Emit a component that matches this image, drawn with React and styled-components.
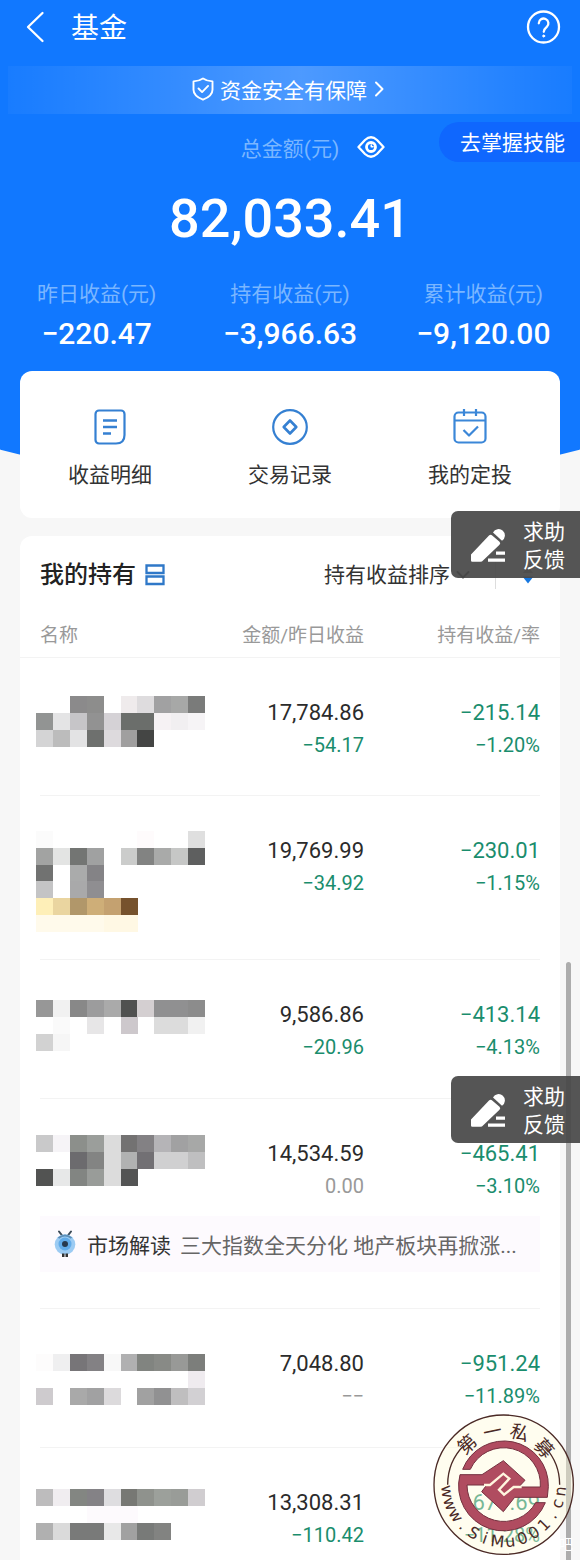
import React from "react";
import styled, { createGlobalStyle } from "styled-components";

const GlobalStyle = createGlobalStyle`
  *, *::before { box-sizing: border-box; }
  body {
    margin: 0;
    background: #f7f7f7;
    font-family: Roboto, "Noto Sans CJK SC", sans-serif;
    color: #333;
  }
  button, select {
    font: inherit;
    color: inherit;
    background: none;
    border: 0;
    padding: 0;
    margin: 0;
    cursor: pointer;
  }
  svg { display: block; flex: none; }
  h1, h2, p, dl, dd, dt { margin: 0; }
`;

const Page = styled.div`
  position: relative;
  overflow: hidden;
  isolation: isolate;
  &::before {
    content: "";
    position: absolute;
    inset: 0 0 auto;
    height: 487px;
    background: #1178ff;
    clip-path: ellipse(130% 100% at 50% 0);
    z-index: -1;
  }
`;

const TopBar = styled.header`
  display: flex;
  align-items: center;
  height: 54px;
  padding: 0 18px 0 22px;
  color: #fff;
`;

const IconButton = styled.button`
  display: grid;
  place-items: center;
`;

const Title = styled.h1`
  flex: 1;
  margin-left: 21px;
  padding-top: 3px;
  font-size: 28px;
  line-height: 40px;
  font-weight: 400;
`;

const SafetyBanner = styled.a`
  display: flex;
  align-items: center;
  justify-content: center;
  gap: 6px;
  height: 48px;
  margin: 12px 8px 0;
  padding: 0 3px 2px 0;
  font-size: 21px;
  color: #fff;
  text-decoration: none;
  background: linear-gradient(90deg, rgba(255, 255, 255, 0.03), rgba(255, 255, 255, 0.14) 28%, rgba(255, 255, 255, 0.25) 52%, rgba(255, 255, 255, 0.14) 76%, rgba(255, 255, 255, 0.03));
`;

const SkillPill = styled.button`
  position: absolute;
  top: 122px;
  right: 0;
  height: 40px;
  padding: 0 15px 2px 21px;
  border-radius: 20px 0 0 20px;
  background: #0f67fe;
  color: #fff;
  font-size: 21px;
`;

const Total = styled.section`
  padding-top: 16px;
  text-align: center;
  color: #fff;
`;

const TotalLabel = styled.div`
  display: flex;
  align-items: center;
  justify-content: center;
  gap: 18px;
  height: 34px;
  padding-left: 46px;
  font-size: 21px;
  color: #7ab6ff;
  button { color: #fff; }
`;

const TotalAmount = styled.p`
  margin-top: 21px;
  font-size: 54px;
  line-height: 68px;
  font-weight: 500;
`;

const Stats = styled.dl`
  display: grid;
  grid-template-columns: repeat(3, 1fr);
  padding: 27px 0 19px;
  text-align: center;
`;

const StatLabel = styled.dt`
  font-size: 21px;
  line-height: 28px;
  color: #7ab6ff;
`;

const StatValue = styled.dd`
  margin-top: 8px;
  font-size: 30px;
  line-height: 36px;
  font-weight: 500;
  color: #fff;
`;

const Card = styled.section`
  margin: 0 20px 18px;
  background: #fff;
  border-radius: 12px;
`;

const Shortcuts = styled(Card)`
  display: grid;
  grid-template-columns: repeat(3, 1fr);
  height: 147px;
`;

const Shortcut = styled.button`
  display: flex;
  flex-direction: column;
  align-items: center;
  gap: 11px;
  padding-top: 37px;
  font-size: 21px;
  line-height: 32px;
  color: #333;
`;

const Holdings = styled(Card)`
  margin-bottom: 0;
  border-radius: 12px 12px 0 0;
`;

const HoldingsHead = styled.div`
  display: flex;
  align-items: center;
  height: 78px;
  padding: 0 25px 0 20px;
`;

const HoldingsTitle = styled.h2`
  font-size: 24px;
  line-height: 32px;
  font-weight: 500;
  color: #222;
`;

const ViewToggle = styled(IconButton)`
  margin-left: 9px;
  margin-right: auto;
`;

const SortSelect = styled.select`
  appearance: none;
  font-size: 21px;
  line-height: 32px;
  margin-right: 6px;
`;

const HeadDivider = styled.i`
  width: 1px;
  height: 28px;
  margin: 0 25px;
  background: #ddd;
`;

const Table = styled.table`
  display: block;
  thead, tbody { display: block; }
`;

const HeadRow = styled.tr`
  display: grid;
  grid-template-columns: 169px 1fr 176px;
  height: 44px;
  padding: 0 20px;
  border-bottom: 1px solid #f3f3f3;
`;

const HeadCell = styled.th`
  padding: 0;
  font-size: 19px;
  line-height: 43px;
  font-weight: 400;
  color: #999;
  text-align: ${(p) => (p.$start ? "left" : "right")};
`;

const Row = styled.tr`
  display: grid;
  grid-template-columns: 165px 1fr 176px;
  margin: 0 20px;
  padding-bottom: ${(p) => p.$space}px;
  border-bottom: 1px solid #f3f3f3;
  &:last-child { border-bottom: 0; }
`;

const NameCell = styled.td`
  height: 106px;
  padding: 0;
  svg {
    margin-left: -4px;
    overflow: visible;
  }
`;

const FigureCell = styled.td`
  padding: 38px 0 0;
  text-align: right;
`;

const tones = { dark: "#2b2b2b", loss: "#1a8d6d", muted: "#999" };

const Figure = styled.div`
  font-size: ${(p) => (p.$small ? 20 : 22)}px;
  line-height: 33px;
  color: ${(p) => tones[p.$tone]};
`;

const InsightCell = styled.td`
  grid-column: 1 / -1;
  margin-top: 11px;
  padding: 0;
`;

const Insight = styled.a`
  display: flex;
  align-items: center;
  height: 56px;
  padding-left: 14px;
  background: #fdfafe;
  font-size: 21px;
  color: #666;
  text-decoration: none;
  white-space: nowrap;
  strong {
    margin: 0 9px 0 11px;
    font-weight: 400;
    color: #333;
  }
`;

const Feedback = styled.button`
  position: absolute;
  top: ${(p) => p.$top}px;
  right: 0;
  display: flex;
  align-items: center;
  gap: 16px;
  height: 67px;
  padding: 2px 15px 0 19px;
  border-radius: 7px 0 0 7px;
  background: rgba(72, 72, 72, 0.93);
  color: #fff;
  font-size: 21px;
  line-height: 28px;
  span { width: 42px; }
`;

const ScrollThumb = styled.div`
  position: absolute;
  top: 962px;
  right: 9px;
  bottom: 0;
  width: 5px;
  border-radius: 3px 3px 0 0;
  background: #adadad;
`;

const StampBox = styled.div`
  position: absolute;
  right: 6px;
  bottom: 5px;
`;

const Watermark = styled.span`
  position: absolute;
  right: 7px;
  bottom: 6px;
  font-size: 14px;
  line-height: 20px;
  color: #fff;
`;

const line = { fill: "none", stroke: "currentColor", strokeLinecap: "round", strokeLinejoin: "round" };

const BackIcon = () => (
  <svg width="28" height="34" viewBox="0 0 28 34" {...line} strokeWidth="2.3">
    <path d="M20.500 3 6 17 20.500 31" />
  </svg>
);

const HelpIcon = () => (
  <svg width="36" height="36" viewBox="0 0 36 36" {...line} strokeWidth="2.3">
    <circle cx="17.500" cy="18" r="15.500" />
    <path d="M12.800 14.300a4.800 4.800 0 1 1 8 3.600c-2 1.700-3 2.400-3 4.900" />
    <circle cx="17.700" cy="27" r="1" fill="currentColor" strokeWidth="1" />
  </svg>
);

const ShieldIcon = () => (
  <svg width="22" height="24" viewBox="0 0 22 24" {...line} strokeWidth="1.900">
    <path d="M11 1.500c3 2 6 2.700 9.500 2.900v8.300c0 4.500-4 7.800-9.500 10-5.500-2.200-9.500-5.500-9.500-10V4.400C5 4.200 8 3.500 11 1.500Z" />
    <path d="m6.500 11.500 3.600 3.600 6-6.200" />
  </svg>
);

const ChevronRight = () => (
  <svg width="12" height="16" viewBox="0 0 12 16" {...line} strokeWidth="2">
    <path d="m3 1.500 6.500 6.500L3 14.500" />
  </svg>
);

const EyeIcon = () => (
  <svg width="28" height="24" viewBox="0 0 28 24" {...line} strokeWidth="2.3">
    <path d="M1.500 12 8 5q6-5.500 12 0L26.500 12 20 19q-6 5.500-12 0Z" />
    <circle cx="14" cy="12" r="4.500" strokeWidth="2.800" />
    <path d="M14.300 10v1.700h1.700" strokeWidth="1.600" />
  </svg>
);

const DetailIcon = () => (
  <svg width="40" height="40" viewBox="0 0 40 40" fill="none" stroke="#3580d2" strokeWidth="2.200" strokeLinejoin="round">
    <path d="M9 2.500h22a3.500 3.500 0 0 1 3.500 3.500v21q0 8.500-8.500 8.500H9A3.500 3.500 0 0 1 5.500 32V6A3.500 3.500 0 0 1 9 2.500Z" />
    <path d="M13 12.500h14M13 19h14M13 25.500h8" strokeWidth="2.500" />
  </svg>
);

const RecordIcon = () => (
  <svg width="40" height="40" viewBox="0 0 40 40" fill="none" stroke="#3580d2" strokeWidth="2.200" strokeLinejoin="round">
    <circle cx="20" cy="19" r="16.800" />
    <path d="m20 12.500 6.300 6.500L20 25.500l-6.300-6.500Z" strokeWidth="2.600" />
  </svg>
);

const PlanIcon = () => (
  <svg width="40" height="40" viewBox="0 0 40 40" fill="none" stroke="#3b87d8" strokeWidth="2.200" strokeLinejoin="round">
    <rect x="4.500" y="4.500" width="31" height="30" rx="4" />
    <path d="M4.500 12.500h31M14 1V8M26 1V8M13.500 22l5.500 5.500 9-9" />
  </svg>
);

const ListIcon = () => (
  <svg width="20" height="22" viewBox="0 0 20 22" fill="none" stroke="#2f78c8" strokeWidth="2.300">
    <path d="M1.500 1.500h17v7.500h-17ZM1.500 12.500h17v7.500h-17Z" />
  </svg>
);

const ChevronDown = () => (
  <svg width="14" height="10" viewBox="0 0 14 10" {...line} strokeWidth="2">
    <path d="m1.500 2 5.500 5.500L12.500 2" />
  </svg>
);

const SortIcon = () => (
  <svg width="14" height="20" viewBox="0 0 14 20">
    <path d="M7 1l5 7H2Z" fill="#999" />
    <path d="M1.500 11.500h11L7 18.500Z" fill="#1677e0" />
  </svg>
);

const PencilIcon = () => (
  <svg width="37" height="36" viewBox="0 0 37 36" fill="#fff">
    <path d="M1 32.500v-6L19 7.500q1.700-1.500 3.200 0l7.300 6.300q1.500 1.500 0 3L13 32.500q-.8 1.300-2.500 1.300H2.300Q1 33.800 1 32.500Z" />
    <path d="M23 4.500a6.300 6.300 0 1 1 9 8.200Z" />
    <path d="M26 23.500h9v3.200h-9ZM18 30.500h17v3.300H18Z" />
  </svg>
);

const AntIcon = () => (
  <svg width="22" height="28" viewBox="0 0 22 28">
    <path d="M5 1.500 8.500 6M17 1.500 13.500 6" stroke="#3b4a57" strokeWidth="2" strokeLinecap="round" />
    <circle cx="11" cy="14.500" r="10.300" fill="#9ccbf3" />
    <path d="M4.500 8q6.500-5 13 0" stroke="#5d8fb9" strokeWidth="2" fill="none" />
    <circle cx="11" cy="14" r="6.500" fill="#62abe9" />
    <circle cx="11" cy="14" r="3" fill="#27394e" />
    <path d="M8 23.500h2.500V27H8ZM11.500 23.500H14V27h-2.500Z" fill="#333" />
  </svg>
);

/* Pixelated fund name: one array for each line of cells, null leaves a cell empty. */
const Mosaic = ({ top, cells }) => (
  <svg width="169" height="105" viewBox="0 0 169 105" shapeRendering="crispEdges" role="img" aria-label="基金名称已隐藏">
    {cells.map((row, y) =>
      row.map(
        (fill, x) =>
          fill && <rect key={`${x}-${y}`} x={x * 16.9} y={top + y * 16.8} width="17" height="17" fill={fill} />
      )
    )}
  </svg>
);

const _ = null;
const holdings = [
  {
    amount: "17,784.86", day: "−54.17", gain: "−215.14", rate: "−1.20%", space: 31, top: 38,
    cells: [
      [_, _, "#8b8a8b", "#8d8d8c", _, "#efebec", "#dedcde", "#a1a1a2", "#a7a8a7", "#7a7b7a"],
      ["#929493", "#e4e4e5", "#c6c5c8", "#929292", "#d5d2d6", "#6b6e6b", "#6b6e6b", "#f6f2f4", "#f1eff1", "#f6f4f6"],
      ["#d4d4d5", "#bcbcbc", "#e3e3e4", "#6e706e", "#dddadd", "#a09f9f", "#444544", _, _, _],
    ],
  },
  {
    amount: "19,769.99", day: "−34.92", gain: "−230.01", rate: "−1.15%", space: 57, top: 35,
    cells: [
      ["#fbfbfb", _, _, _, _, _, "#fefbfc", _, _, "#dfdfdf"],
      ["#a2a3a2", "#e3e4e3", "#737573", "#a0a1a1", _, "#cbcccb", "#828382", "#a9aaa9", "#c6c7c6", "#5e5f5f"],
      ["#717271", _, "#aaabab", "#848386", _, _, _, _, _, _],
      ["#c4c4c5", _, "#a9a9aa", "#8f8e91", _, _, _, _, _, _],
      ["#feefb8", "#ead5a0", "#b1976a", "#ceae78", "#c4a170", "#76522d", _, _, _, _],
      ["#fffaeb", "#fffaeb", "#fffaeb", "#fffaeb", "#fff8e4", "#fff8e4", _, _, _, _],
    ],
  },
  {
    amount: "9,586.86", day: "−20.96", gain: "−413.14", rate: "−4.13%", space: 32, top: 40,
    cells: [
      ["#979797", "#f1f1f1", "#888888", "#9c9c9d", "#aaaaaa", "#505150", "#d4cfd1", "#909091", "#909091", "#8c8c8c"],
      [_, "#fafafa", _, "#e7e6e7", _, "#cdc8cc", _, "#dcdcdc", "#dcdcdc", "#f1f1f1"],
      ["#d2d2d2", "#f6f6f6", _, _, _, _, _, _, _, _],
    ],
  },
  {
    amount: "14,534.59", day: "0.00", dayTone: "muted", gain: "−465.41", rate: "−3.10%", space: 36, top: 36,
    insight: true,
    cells: [
      ["#c9c9ca", "#f6f4f7", "#8c8f8b", "#9b9e9b", "#dcdcdc", "#737272", "#838184", "#b5b4b7", "#a1a1a2", "#a7a8a7"],
      [_, _, "#6c6b6e", "#838483", "#dcdcdc", "#b1b2b2", "#727074", "#d0d0d1", "#d0d0d1", "#bfbfc0"],
      ["#525352", "#e7e8e8", "#828582", "#999c99", "#dcdcdc", "#535454", _, _, _, _],
    ],
  },
  {
    amount: "7,048.80", day: "−−", dayTone: "muted", gain: "−951.24", rate: "−11.89%", space: 32, top: 45,
    cells: [
      ["#fdfcfc", "#efeff0", "#777578", "#838184", "#f8f8f8", "#b0b0b1", "#818480", "#888a86", "#989997", "#7c7e7b"],
      [_, _, _, _, _, _, _, _, _, "#efebef"],
      ["#cecbce", _, "#a9a9a9", "#a1a1a2", "#dcdadc", _, "#a1a1a1", "#919192", "#bfbebf", "#d2d0d3"],
    ],
  },
  {
    amount: "13,308.31", day: "−110.42", gain: "−671.69", rate: "−11.28%", space: 6, top: 41,
    cells: [
      ["#bdbcbd", "#f0edf0", "#838682", "#848286", "#dedde0", "#777874", "#8f928d", "#9ca09b", "#999c98", "#d0cdd0"],
      [_, _, _, "#fdfafd", "#fdfafd", "#fdfafd", _, _, _, _],
      ["#b0b0b0", "#dadada", "#797a79", "#797a79", "#e8e8e8", "#a1a1a1", "#787a78", "#828381", _, _],
    ],
  },
];

const sealTop = [["第", -42], ["一", -12], ["私", 17], ["募", 48]];
const sealSite = "www.SiMu001.cn".split("");

const Stamp = () => (
  <svg width="141" height="141" viewBox="-61 -61 423 423" textAnchor="middle" fill="#4b2a26">
    <circle cx="151" cy="151" r="209" fill="#fffbd8" fillOpacity="0.4" stroke="#4b2a26" strokeWidth="4" />
    <g fill="none" stroke="#4b2a26" strokeWidth="4">
      <path d="M-17 151A168 168 0 0 1 32 33" />
      <path d="M319 151A168 168 0 0 0 276 39" />
    </g>
    <path
      d="M28 105A133 133 0 0 1 285 157L282 189H184L150 232 85 172 100 152H41A110 110 0 0 0 247 205H276A135 135 0 0 1 20 121H86L150 79 215 138 196 158H261A110 110 0 0 0 51 105Z"
      fill="#b04c60"
      stroke="#74303f"
      strokeWidth="3"
      strokeLinejoin="round"
    />
    <path d="M92 152H110L150 118 168 133 137 166 152 181 181 158H205" fill="none" stroke="#fff6df" strokeWidth="7" />
    {sealTop.map(([glyph, angle]) => (
      <text key={glyph} x="151" y="8" fontSize="56" fontFamily="'Noto Sans CJK SC', sans-serif" transform={`rotate(${angle} 151 151)`}>
        {glyph}
      </text>
    ))}
    {sealSite.map((glyph, i) => (
      <text key={i} x="151" y="338" fontSize="48" fontFamily="'DejaVu Sans', sans-serif" transform={`rotate(${83 - i * 12.8} 151 151)`}>
        {glyph}
      </text>
    ))}
  </svg>
);

const stats = [
  ["昨日收益(元)", "−220.47"],
  ["持有收益(元)", "−3,966.63"],
  ["累计收益(元)", "−9,120.00"],
];

const shortcuts = [
  ["收益明细", DetailIcon],
  ["交易记录", RecordIcon],
  ["我的定投", PlanIcon],
];

const FeedbackButton = ({ top }) => (
  <Feedback $top={top}>
    <PencilIcon />
    <span>求助反馈</span>
  </Feedback>
);

export default function App() {
  return (
    <Page>
      <GlobalStyle />
      <TopBar>
        <IconButton aria-label="返回"><BackIcon /></IconButton>
        <Title>基金</Title>
        <IconButton aria-label="帮助"><HelpIcon /></IconButton>
      </TopBar>
      <SafetyBanner href="#safety">
        <ShieldIcon />
        资金安全有保障
        <ChevronRight />
      </SafetyBanner>
      <SkillPill>去掌握技能</SkillPill>
      <Total>
        <TotalLabel>
          <span>总金额(元)</span>
          <IconButton aria-label="隐藏金额"><EyeIcon /></IconButton>
        </TotalLabel>
        <TotalAmount>82,033.41</TotalAmount>
        <Stats>
          {stats.map(([label, value]) => (
            <div key={label}>
              <StatLabel>{label}</StatLabel>
              <StatValue>{value}</StatValue>
            </div>
          ))}
        </Stats>
      </Total>
      <Shortcuts as="nav">
        {shortcuts.map(([label, Icon]) => (
          <Shortcut key={label}>
            <Icon />
            {label}
          </Shortcut>
        ))}
      </Shortcuts>
      <Holdings>
        <HoldingsHead>
          <HoldingsTitle>我的持有</HoldingsTitle>
          <ViewToggle aria-label="切换视图"><ListIcon /></ViewToggle>
          <SortSelect aria-label="排序方式">
            <option>持有收益排序</option>
          </SortSelect>
          <ChevronDown />
          <HeadDivider />
          <IconButton aria-label="升序或降序"><SortIcon /></IconButton>
        </HoldingsHead>
        <Table>
          <thead>
            <HeadRow>
              <HeadCell $start>名称</HeadCell>
              <HeadCell>金额/昨日收益</HeadCell>
              <HeadCell>持有收益/率</HeadCell>
            </HeadRow>
          </thead>
          <tbody>
            {holdings.map((h) => (
              <Row key={h.amount} $space={h.space}>
                <NameCell><Mosaic top={h.top} cells={h.cells} /></NameCell>
                <FigureCell>
                  <Figure $tone="dark">{h.amount}</Figure>
                  <Figure $small $tone={h.dayTone || "loss"}>{h.day}</Figure>
                </FigureCell>
                <FigureCell>
                  <Figure $tone="loss">{h.gain}</Figure>
                  <Figure $small $tone="loss">{h.rate}</Figure>
                </FigureCell>
                {h.insight && (
                  <InsightCell colSpan={3}>
                    <Insight href="#insight">
                      <AntIcon />
                      <strong>市场解读</strong>
                      三大指数全天分化 地产板块再掀涨...
                    </Insight>
                  </InsightCell>
                )}
              </Row>
            ))}
          </tbody>
        </Table>
      </Holdings>
      <ScrollThumb />
      <FeedbackButton top={511} />
      <FeedbackButton top={1076} />
      <StampBox><Stamp /></StampBox>
      <Watermark>吧</Watermark>
    </Page>
  );
}
